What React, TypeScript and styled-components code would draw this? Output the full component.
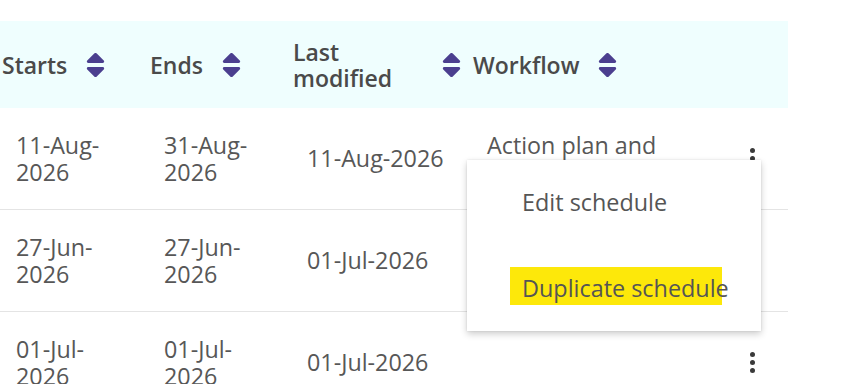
import React from "react";
import styled, { createGlobalStyle } from "styled-components";

const GlobalStyle = createGlobalStyle`
  html, body { margin: 0; padding: 0; background: #ffffff; }
  body { font-family: "Open Sans", "Noto Sans", sans-serif; }
  * { box-sizing: border-box; }
`;

const Page = styled.div`
  width: 845px;
  height: 384px;
  overflow: hidden;
  padding-top: 21px;
  background: #ffffff;
`;

const Table = styled.div`
  position: relative;
  width: 788px;
`;

const Row = styled.div`
  display: grid;
  grid-template-columns: 148px 143px 180px 264px 53px;
  align-items: center;
`;

const HeaderRow = styled(Row)`
  height: 87px;
  background: #effefe;
`;

const HeaderCell = styled.div`
  display: flex;
  align-items: center;
  gap: 19px;
  padding-left: 2px;
  font-size: 23px;
  line-height: 26px;
  font-weight: 600;
  color: #4a4a4a;
`;

const HeaderLabel = styled.span<{ $width?: number }>`
  display: block;
  ${(p) => (p.$width ? `width: ${p.$width}px;` : "")}
`;

const BodyRow = styled(Row)`
  min-height: 102px;
  border-bottom: 1px solid #e4e4e4;
`;

const BodyCell = styled.div`
  padding: 0 16px;
  font-size: 23.3px;
  line-height: 27px;
  color: #575757;
`;

const ActionCell = styled.div`
  display: flex;
  padding-left: 15px;
`;

const Kebab = styled.span`
  display: flex;
  flex-direction: column;
  gap: 3px;
`;

const Dot = styled.span`
  width: 5px;
  height: 5px;
  border-radius: 50%;
  background: #3a3a3a;
`;

const Menu = styled.div`
  position: absolute;
  left: 467px;
  top: 139px;
  width: 294px;
  height: 171px;
  background: #ffffff;
  box-shadow: 0 3px 7px rgba(0, 0, 0, 0.2), 0 0 2px rgba(0, 0, 0, 0.1);
  display: flex;
  flex-direction: column;
  z-index: 2;
`;

const MenuItem = styled.div`
  flex: 1;
  display: flex;
  align-items: center;
  padding-left: 55px;
  font-size: 23.4px;
  line-height: 27px;
  color: #555555;
`;

const Highlight = styled.span`
  position: relative;
  z-index: 0;
  &::before {
    content: "";
    position: absolute;
    left: -12px;
    width: 212px;
    top: -8px;
    bottom: -3px;
    background: #fde80a;
    z-index: -1;
  }
`;

const SortIcon = () => (
  <svg width="19" height="24" viewBox="8 58 304 396" fill="#4b3f8f" aria-hidden="true">
    <path d="M41 288h238c21.4 0 32.1 25.9 17 41L177 448c-9.4 9.4-24.6 9.4-33.9 0L24 329c-15.1-15.1-4.4-41 17-41zm255-105L177 64c-9.4-9.4-24.6-9.4-33.9 0L24 183c-15.1 15.1-4.4 41 17 41h238c21.4 0 32.1-25.9 17-41z" />
  </svg>
);

const KebabIcon = () => (
  <Kebab>
    <Dot />
    <Dot />
    <Dot />
  </Kebab>
);

const DateText = ({ value }: { value: string }) => {
  const idx = value.lastIndexOf("-") + 1;
  return (
    <>
      {value.slice(0, idx)}
      <wbr />
      {value.slice(idx)}
    </>
  );
};

const rows = [
  { starts: "11-Aug-2026", ends: "31-Aug-2026", modified: "11-Aug-2026", workflow: "Action plan and review" },
  { starts: "27-Jun-2026", ends: "27-Jun-2026", modified: "01-Jul-2026", workflow: "" },
  { starts: "01-Jul-2026", ends: "01-Jul-2026", modified: "01-Jul-2026", workflow: "" },
];

export default function App() {
  return (
    <>
      <GlobalStyle />
      <Page>
        <Table>
          <HeaderRow>
            <HeaderCell>
              <HeaderLabel>Starts</HeaderLabel>
              <SortIcon />
            </HeaderCell>
            <HeaderCell>
              <HeaderLabel>Ends</HeaderLabel>
              <SortIcon />
            </HeaderCell>
            <HeaderCell>
              <HeaderLabel $width={130}>Last modified</HeaderLabel>
              <SortIcon />
            </HeaderCell>
            <HeaderCell>
              <HeaderLabel>Workflow</HeaderLabel>
              <SortIcon />
            </HeaderCell>
            <HeaderCell />
          </HeaderRow>
          {rows.map((r, i) => (
            <BodyRow key={i}>
              <BodyCell>
                <DateText value={r.starts} />
              </BodyCell>
              <BodyCell>
                <DateText value={r.ends} />
              </BodyCell>
              <BodyCell>{r.modified}</BodyCell>
              <BodyCell>{r.workflow}</BodyCell>
              <ActionCell>
                <KebabIcon />
              </ActionCell>
            </BodyRow>
          ))}
          <Menu>
            <MenuItem>Edit schedule</MenuItem>
            <MenuItem>
              <Highlight>Duplicate schedule</Highlight>
            </MenuItem>
          </Menu>
        </Table>
      </Page>
    </>
  );
}
